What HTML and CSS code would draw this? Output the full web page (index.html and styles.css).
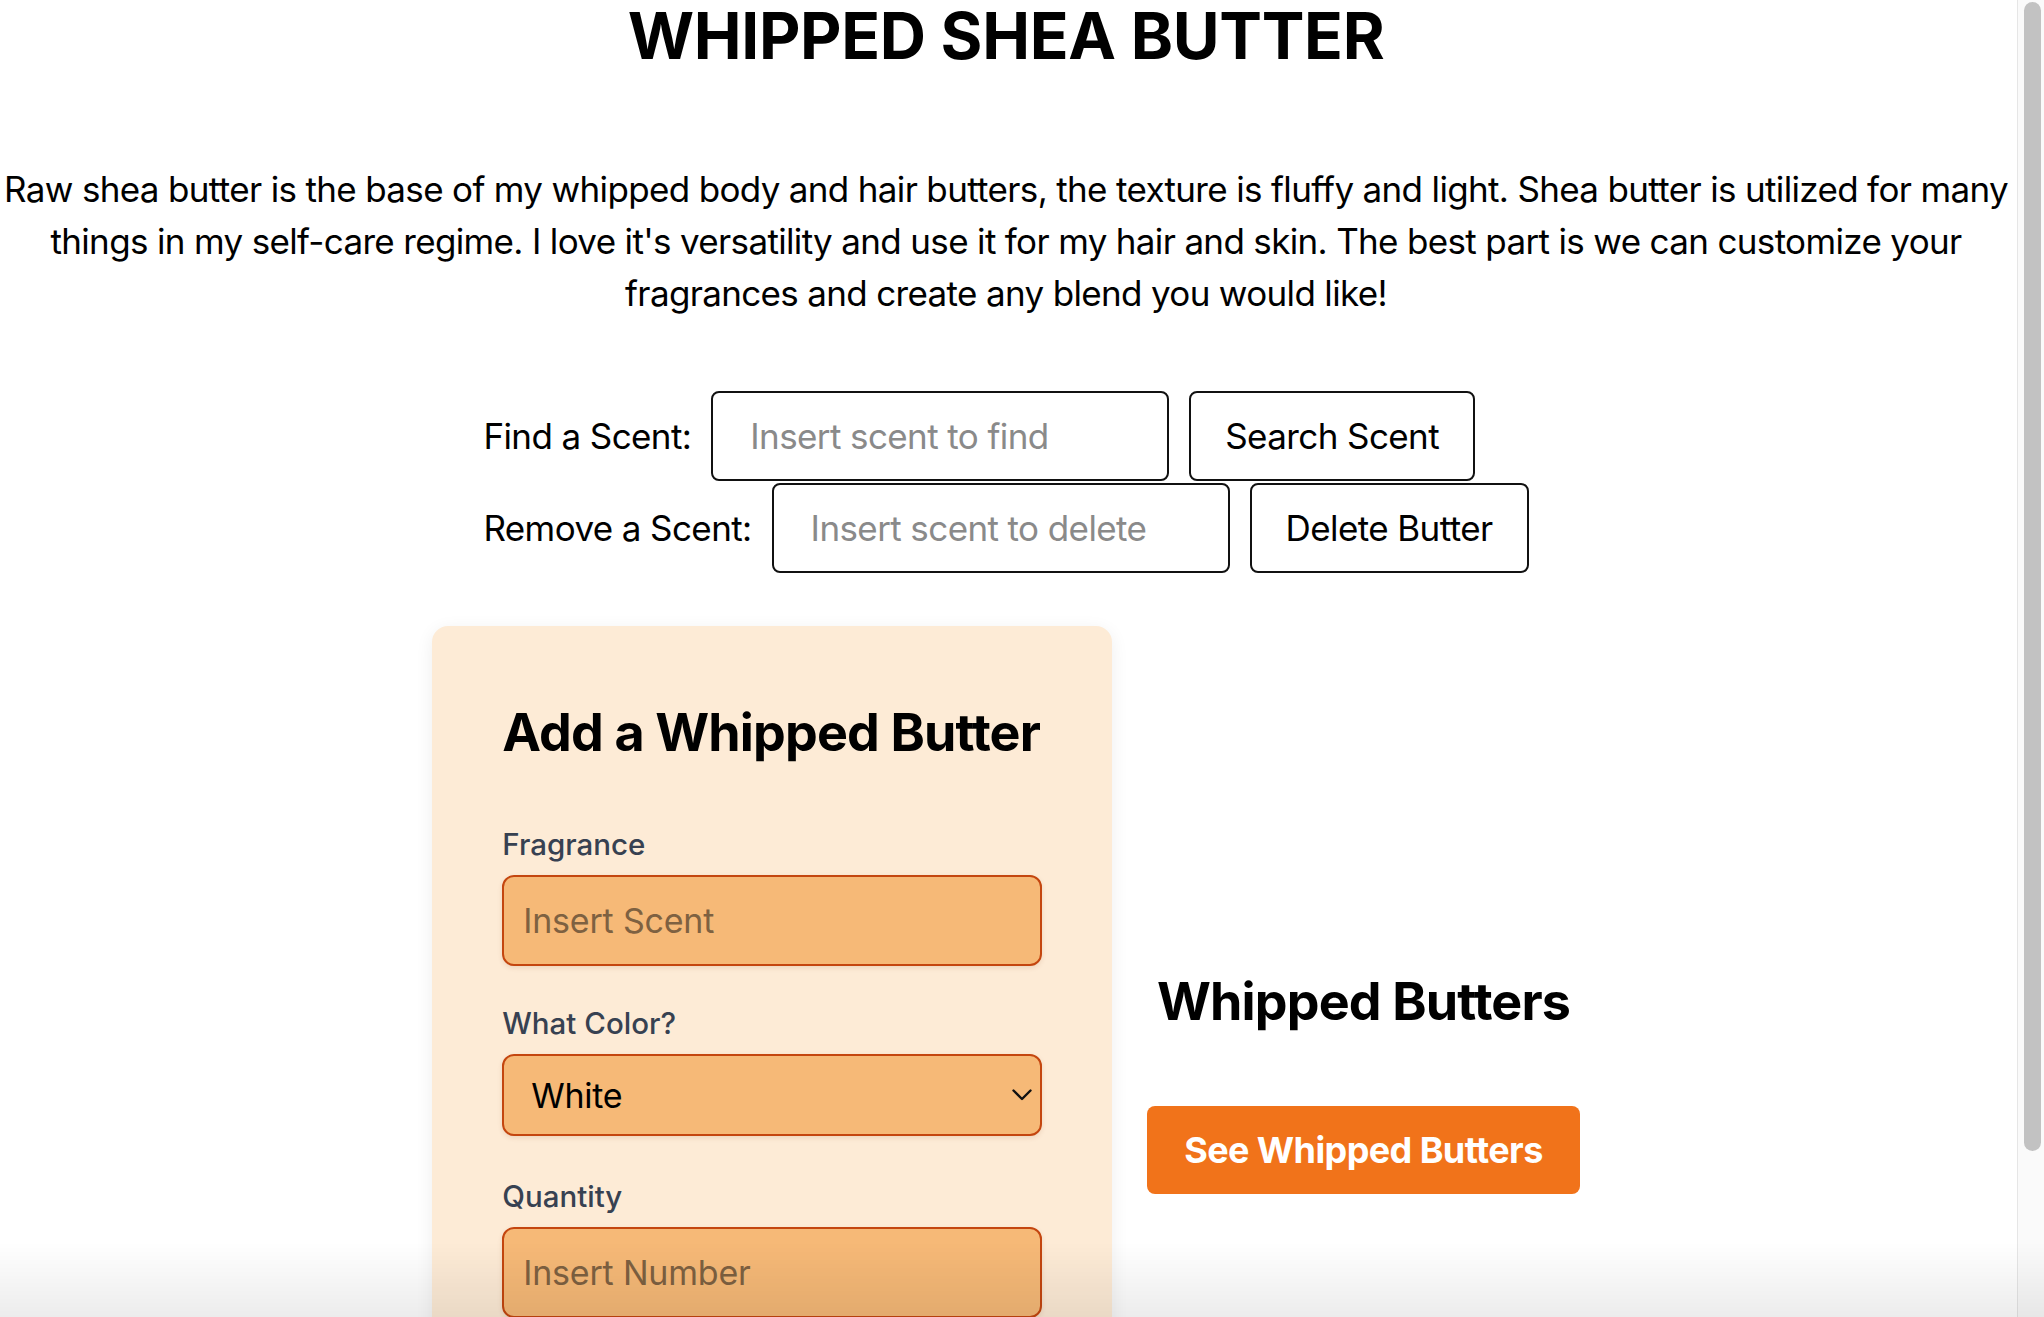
FILE: index.html
```html
<!DOCTYPE html>
<html lang="en">
<head>
<meta charset="utf-8">
<title>Whipped Shea Butter</title>
<link rel="stylesheet" href="styles.css">
</head>
<body>
<main class="page">
  <h1 class="title">WHIPPED SHEA BUTTER</h1>
  <p class="intro">Raw shea butter is the base of my whipped body and hair butters, the texture is fluffy and light. Shea butter is utilized for many things in my self-care regime. I love it's versatility and use it for my hair and skin. The best part is we can customize your fragrances and create any blend you would like!</p>

  <form class="scent-tools">
    <div class="tool-row">
      <label class="tool-label" for="find">Find a Scent:</label>
      <input class="tool-input" id="find" type="text" placeholder="Insert scent to find">
      <button class="tool-button" type="button">Search Scent</button>
    </div>
    <div class="tool-row">
      <label class="tool-label" for="remove">Remove a Scent:</label>
      <input class="tool-input" id="remove" type="text" placeholder="Insert scent to delete">
      <button class="tool-button" type="button">Delete Butter</button>
    </div>
  </form>

  <section class="workspace">
    <form class="card">
      <h2 class="card-title">Add a Whipped Butter</h2>
      <div class="field field-first">
        <label class="field-label" for="fragrance">Fragrance</label>
        <input class="field-input" id="fragrance" type="text" placeholder="Insert Scent">
      </div>
      <div class="field">
        <label class="field-label" for="color">What Color?</label>
        <div class="select-wrap">
          <select class="field-select" id="color">
            <option>White</option>
            <option>Yellow</option>
            <option>Pink</option>
            <option>Purple</option>
          </select>
          <svg class="chevron" width="20" height="12" viewBox="0 0 20 12" aria-hidden="true"><path d="M1.5 1.5 L10 10 L18.5 1.5" fill="none" stroke="#111" stroke-width="2.4" stroke-linecap="round" stroke-linejoin="round"/></svg>
        </div>
      </div>
      <div class="field">
        <label class="field-label" for="qty">Quantity</label>
        <input class="field-input" id="qty" type="number" placeholder="Insert Number">
      </div>
      <button class="submit" type="button">Add Whipped Butter</button>
    </form>

    <div class="listing">
      <h2 class="listing-title">Whipped Butters</h2>
      <button class="see-button" type="button">See Whipped Butters</button>
    </div>
  </section>
</main>
<div class="scrollbar" aria-hidden="true"><div class="scrollbar-thumb"></div></div>
<div class="bottom-shade"></div>
</body>
</html>
```

FILE: styles.css
```css
html {
  background: #ffffff;
  scrollbar-width: none;
}

html::-webkit-scrollbar {
  display: none;
}

body {
  margin: 0;
  display: grid;
  grid-template-columns: minmax(0, 1fr) 32px;
  align-items: start;
  font-family: Inter, "Noto Sans", "Liberation Sans", sans-serif;
  color: #000000;
  background: #ffffff;
}

/* scrollbar rail at the right edge of the window */
.scrollbar {
  position: sticky;
  top: 0;
  height: 100vh;
  background: linear-gradient(to right, #ffffff 0 5px, #e6e6e6 5px 6px, #fafafa 6px);
}

.scrollbar-thumb {
  margin: 2px 3px 0 12px;
  height: 1149px;
  border-radius: 9px;
  background: #c2c2c2;
}

.page {
  display: flex;
  flex-direction: column;
  align-items: center;
  padding-bottom: 40px;
}

.title {
  margin: 0;
  padding-top: 4px;
  font-size: 64px;
  line-height: 64px;
  font-weight: 700;
  letter-spacing: -0.3px;
  white-space: nowrap;
}

.intro {
  margin: 95px 0 0;
  font-size: 35px;
  line-height: 52px;
  letter-spacing: -0.66px;
  text-align: center;
}

.scent-tools {
  margin-top: 72px;
  display: flex;
  flex-direction: column;
  align-items: flex-start;
  gap: 2px;
}

.tool-row {
  display: flex;
  align-items: center;
  gap: 20px;
}

.tool-label {
  font-size: 35px;
  letter-spacing: -0.6px;
}

.tool-input {
  box-sizing: border-box;
  width: 458px;
  height: 90px;
  padding: 0 37px;
  border: 2px solid #111111;
  border-radius: 8px;
  font-family: inherit;
  font-size: 35px;
  letter-spacing: -0.6px;
  color: #000000;
  background: #ffffff;
  outline: none;
}

.tool-input::placeholder {
  color: #8a8a8a;
}

.tool-button {
  box-sizing: border-box;
  height: 90px;
  padding: 0 34px;
  border: 2px solid #111111;
  border-radius: 8px;
  background: #ffffff;
  font-family: inherit;
  font-size: 35px;
  letter-spacing: -0.6px;
  color: #000000;
}

.workspace {
  margin-top: 53px;
  display: flex;
  align-items: center;
  gap: 35px;
}

.card {
  box-sizing: border-box;
  width: 680px;
  padding: 75px 70px;
  background: #fdebd6;
  border-radius: 16px;
  box-shadow: 0 4px 18px rgba(0, 0, 0, 0.07);
  display: flex;
  flex-direction: column;
}

.card-title {
  margin: 0 0 63px;
  font-size: 52px;
  line-height: 63px;
  font-weight: 700;
  letter-spacing: -0.85px;
  white-space: nowrap;
}

.field {
  display: flex;
  flex-direction: column;
  margin-bottom: 43px;
}

.field-first {
  margin-bottom: 40px;
}

.field-label {
  margin-bottom: 13px;
  font-size: 29.5px;
  line-height: 35px;
  font-weight: 500;
  color: #374151;
}

.field-input,
.field-select {
  box-sizing: border-box;
  width: 100%;
  border: 2px solid #c4460f;
  border-radius: 12px;
  background: #f6b977;
  font-family: inherit;
  color: #000000;
  box-shadow: 0 2px 5px rgba(120, 60, 10, 0.12);
  outline: none;
}

.field-input {
  height: 91px;
  padding: 0 19px;
  font-size: 34px;
  letter-spacing: -0.2px;
}

.field-input::placeholder {
  color: #7e6141;
}

.select-wrap {
  position: relative;
}

.field-select {
  height: 82px;
  padding: 0 27px;
  font-size: 34px;
  letter-spacing: -0.3px;
  appearance: none;
  -webkit-appearance: none;
}

.chevron {
  position: absolute;
  right: 10px;
  top: 35px;
  pointer-events: none;
}

.submit {
  margin-top: 13px;
  height: 88px;
  border: none;
  border-radius: 8px;
  background: #f1731a;
  color: #ffffff;
  font-family: inherit;
  font-size: 36px;
  font-weight: 700;
  letter-spacing: -0.6px;
}

.listing {
  display: flex;
  flex-direction: column;
  align-items: center;
}

.listing-title {
  margin: 0 0 72px;
  font-size: 52px;
  line-height: 64px;
  font-weight: 700;
  letter-spacing: -0.85px;
  white-space: nowrap;
}

.see-button {
  height: 88px;
  padding: 0 37px;
  border: none;
  border-radius: 8px;
  background: #f1731a;
  color: #ffffff;
  font-family: inherit;
  font-size: 36px;
  font-weight: 700;
  letter-spacing: -0.6px;
}

.bottom-shade {
  position: fixed;
  left: 0;
  right: 0;
  bottom: 0;
  height: 75px;
  background: linear-gradient(to bottom, rgba(0, 0, 0, 0), rgba(0, 0, 0, 0.075));
  pointer-events: none;
}
```
